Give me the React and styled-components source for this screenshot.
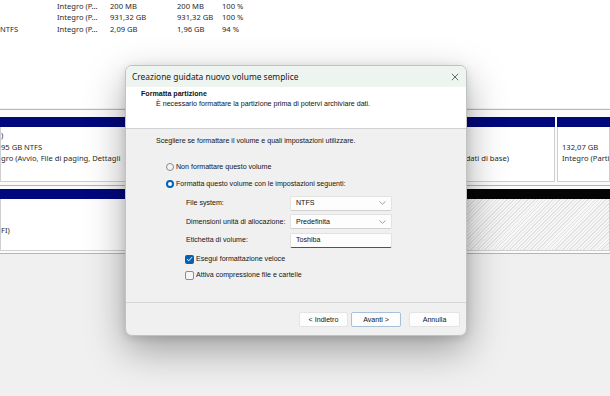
import React from "react";
import styled, { createGlobalStyle } from "styled-components";

const GlobalStyle = createGlobalStyle`
  html, body { margin: 0; padding: 0; }
  body {
    background: #f0f0f0;
    font-family: "Liberation Sans", Arial, sans-serif;
    color: #1b1b1b;
  }
`;

const Page = styled.div`
  position: relative;
  width: 610px;
  height: 396px;
  overflow: hidden;
  background: #f0f0f0;
  display: flex;
  flex-direction: column;
`;

/* ---------- background: volume list ---------- */
const VolumeList = styled.div`
  height: 108px;
  background: #ffffff;
  display: flex;
  flex-direction: column;
  font-family: "Noto Sans", "Liberation Sans", sans-serif;
  font-size: 7.6px;
  color: #2a2a2a;
`;

const VolumeRow = styled.div`
  display: grid;
  grid-template-columns: 57px 53px 67px 45px 1fr;
  height: 11.5px;
  align-items: center;
  white-space: nowrap;
`;

/* ---------- background: disk map ---------- */
const DiskArea = styled.div`
  display: flex;
  flex-direction: column;
  border-top: 1px solid #b9b9b9;
  margin-top: 1px;
`;

const DiskBand = styled.div`
  display: flex;
  gap: 2px;
  padding: ${(p) => p.$pad};
  background: #fbfbfb;
  border-bottom: 1px solid #b4b4b4;
`;

const Partition = styled.div`
  width: ${(p) => p.$w || "auto"};
  flex: ${(p) => (p.$w ? "none" : "1")};
  display: flex;
  flex-direction: column;
  overflow: hidden;
`;

const PartitionHead = styled.div`
  height: 10px;
  background: ${(p) => p.$color};
`;

const PartitionBody = styled.div`
  height: ${(p) => p.$h};
  box-sizing: border-box;
  padding: 3px 0 0 ${(p) => p.$pl || "0px"};
  background: ${(p) =>
    p.$hatch
      ? "repeating-linear-gradient(135deg, #f7f7f7 0px, #f7f7f7 1.5px, #e3e3e3 1.5px, #e3e3e3 2.5px)"
      : "#ffffff"};
  border: 1px solid #cfcfcf;
  border-top: none;
  font-family: "Noto Sans", "Liberation Sans", sans-serif;
  font-size: 7.6px;
  color: #2a2a2a;
  white-space: nowrap;
`;

const PartLine = styled.div`
  height: 11.5px;
  line-height: 11.5px;
  display: flex;
`;

const TailText = styled.span`
  margin-left: auto;
  padding-right: 45px;
`;

/* ---------- dialog ---------- */
const Dialog = styled.div`
  position: absolute;
  left: 125px;
  top: 65px;
  width: 342px;
  height: 271px;
  box-sizing: border-box;
  display: flex;
  flex-direction: column;
  background: #f0f0f0;
  border: 1px solid #bfc4c1;
  border-radius: 7px;
  overflow: hidden;
  box-shadow: 0 14px 38px rgba(0, 0, 0, 0.34), 0 2px 8px rgba(0, 0, 0, 0.12);
`;

const TitleBar = styled.div`
  height: 21px;
  flex: none;
  display: flex;
  align-items: center;
  justify-content: space-between;
  padding: 0 7px 0 6px;
  background: #eef4f0;
`;

const Title = styled.span`
  font-family: "Noto Sans", "Open Sans", sans-serif;
  font-size: 8.4px;
  color: #202020;
`;

const CloseIcon = styled.svg`
  width: 8px;
  height: 8px;
`;

const Header = styled.div`
  height: 42px;
  flex: none;
  box-sizing: border-box;
  background: #ffffff;
  border-bottom: 1px solid #d2d2d2;
  padding: 2px 0 0 15px;
  font-size: 7.1px;
  color: #111;
`;

const HeaderTitle = styled.div`
  font-weight: bold;
  height: 10px;
  line-height: 10px;
`;

const HeaderSub = styled.div`
  height: 11px;
  line-height: 11px;
  padding-left: 15px;
`;

const Body = styled.div`
  flex: 1;
  display: flex;
  flex-direction: column;
  padding: 8px 0 0 30px;
  font-size: 7.1px;
  color: #141414;
`;

const Intro = styled.div`
  height: 9px;
  line-height: 9px;
  margin-bottom: 12.5px;
`;

const ChoiceRow = styled.label`
  height: 17px;
  display: flex;
  align-items: center;
  gap: 2px;
  padding-left: ${(p) => p.$indent};
`;

const Radio = styled.span`
  width: 8px;
  height: 8px;
  box-sizing: border-box;
  border-radius: 50%;
  flex: none;
  background: ${(p) => (p.$on ? "#ffffff" : "#f4f4f4")};
  border: ${(p) => (p.$on ? "2.4px solid #0063b5" : "1px solid #8a8a8a")};
`;

const Fields = styled.div`
  display: flex;
  flex-direction: column;
  padding-left: 30px;
  margin-top: 1.25px;
  margin-bottom: 2px;
`;

const FieldRow = styled.div`
  height: 18.5px;
  display: grid;
  grid-template-columns: 104px 102px;
  align-items: center;
`;

const Control = styled.div`
  height: 15px;
  box-sizing: border-box;
  display: flex;
  align-items: center;
  justify-content: space-between;
  padding: 0 5px 0 5px;
  background: #fdfdfd;
  border: 1px solid #e2e2e2;
  border-bottom: 1px solid ${(p) => (p.$input ? "#2a5b8f" : "#d0d0d0")};
  border-radius: 2px;
  color: #111;
`;

const Chevron = styled.svg`
  width: 7px;
  height: 4px;
`;

const CheckRow = styled.label`
  height: 16px;
  display: flex;
  align-items: center;
  gap: 2px;
  padding-left: 29px;
`;

const Box = styled.span`
  width: 9px;
  height: 9px;
  box-sizing: border-box;
  border-radius: 2px;
  flex: none;
  display: flex;
  align-items: center;
  justify-content: center;
  background: ${(p) => (p.$on ? "#0063b5" : "#f6f6f6")};
  border: ${(p) => (p.$on ? "none" : "1px solid #8c8c8c")};
`;

const Footer = styled.div`
  height: 33px;
  flex: none;
  box-sizing: border-box;
  border-top: 1px solid #d6d6d6;
  display: flex;
  align-items: center;
  justify-content: flex-end;
  padding: 1px 6px 0 0;
  gap: 3px;
`;

const Button = styled.button`
  width: ${(p) => p.$w};
  height: 15px;
  margin-left: ${(p) => p.$ml || "0"};
  padding: 0;
  box-sizing: border-box;
  font-family: "Liberation Sans", Arial, sans-serif;
  font-size: 7.1px;
  color: #141414;
  background: #fdfdfd;
  border: 1px solid ${(p) => (p.$primary ? "#a9c1d8" : "#e4e4e4")};
  border-radius: 2px;
`;

export default function App() {
  return (
    <Page>
      <GlobalStyle />
      <VolumeList>
        <VolumeRow>
          <span />
          <span>Integro (P...</span>
          <span>200 MB</span>
          <span>200 MB</span>
          <span>100 %</span>
        </VolumeRow>
        <VolumeRow>
          <span />
          <span>Integro (P...</span>
          <span>931,32 GB</span>
          <span>931,32 GB</span>
          <span>100 %</span>
        </VolumeRow>
        <VolumeRow>
          <span>NTFS</span>
          <span>Integro (P...</span>
          <span>2,09 GB</span>
          <span>1,96 GB</span>
          <span>94 %</span>
        </VolumeRow>
      </VolumeList>

      <DiskArea>
        <DiskBand $pad="7px 0 3px 0">
          <Partition $w="555px">
            <PartitionHead $color="#00087c" />
            <PartitionBody $h="55px">
              <PartLine>)</PartLine>
              <PartLine>95 GB NTFS</PartLine>
              <PartLine>
                <span>gro (Avvio, File di paging, Dettagli</span>
                <TailText>dati di base)</TailText>
              </PartLine>
            </PartitionBody>
          </Partition>
          <Partition>
            <PartitionHead $color="#00087c" />
            <PartitionBody $h="55px" $pl="4px">
              <PartLine />
              <PartLine>132,07 GB</PartLine>
              <PartLine>Integro (Parti</PartLine>
            </PartitionBody>
          </Partition>
        </DiskBand>
        <DiskBand $pad="3px 0 2px 0">
          <Partition $w="300px">
            <PartitionHead $color="#00087c" />
            <PartitionBody $h="52px">
              <PartLine />
              <PartLine />
              <PartLine>FI)</PartLine>
            </PartitionBody>
          </Partition>
          <Partition>
            <PartitionHead $color="#050505" />
            <PartitionBody $h="52px" $hatch />
          </Partition>
        </DiskBand>
      </DiskArea>

      <Dialog>
        <TitleBar>
          <Title>Creazione guidata nuovo volume semplice</Title>
          <CloseIcon viewBox="0 0 10 10">
            <path d="M1 1 L9 9 M9 1 L1 9" stroke="#333" strokeWidth="0.9" fill="none" />
          </CloseIcon>
        </TitleBar>
        <Header>
          <HeaderTitle>Formatta partizione</HeaderTitle>
          <HeaderSub>È necessario formattare la partizione prima di potervi archiviare dati.</HeaderSub>
        </Header>
        <Body>
          <Intro>Scegliere se formattare il volume e quali impostazioni utilizzare.</Intro>
          <ChoiceRow $indent="10px">
            <Radio />
            <span>Non formattare questo volume</span>
          </ChoiceRow>
          <ChoiceRow $indent="10px">
            <Radio $on />
            <span>Formatta questo volume con le impostazioni seguenti:</span>
          </ChoiceRow>
          <Fields>
            <FieldRow>
              <span>File system:</span>
              <Control>
                <span>NTFS</span>
                <Chevron viewBox="0 0 7 4">
                  <path d="M0.5 0.5 L3.5 3.3 L6.5 0.5" stroke="#8a8a8a" strokeWidth="0.8" fill="none" />
                </Chevron>
              </Control>
            </FieldRow>
            <FieldRow>
              <span>Dimensioni unità di allocazione:</span>
              <Control>
                <span>Predefinita</span>
                <Chevron viewBox="0 0 7 4">
                  <path d="M0.5 0.5 L3.5 3.3 L6.5 0.5" stroke="#8a8a8a" strokeWidth="0.8" fill="none" />
                </Chevron>
              </Control>
            </FieldRow>
            <FieldRow>
              <span>Etichetta di volume:</span>
              <Control $input>
                <span>Toshiba</span>
              </Control>
            </FieldRow>
          </Fields>
          <CheckRow>
            <Box $on>
              <svg width="7" height="6" viewBox="0 0 7 6">
                <path d="M1 3.2 L2.8 4.8 L6 1.2" stroke="#fff" strokeWidth="1" fill="none" />
              </svg>
            </Box>
            <span>Esegui formattazione veloce</span>
          </CheckRow>
          <CheckRow>
            <Box />
            <span>Attiva compressione file e cartelle</span>
          </CheckRow>
        </Body>
        <Footer>
          <Button $w="49px">&lt; Indietro</Button>
          <Button $w="50px" $primary>Avanti &gt;</Button>
          <Button $w="51px" $ml="5px">Annulla</Button>
        </Footer>
      </Dialog>
    </Page>
  );
}
